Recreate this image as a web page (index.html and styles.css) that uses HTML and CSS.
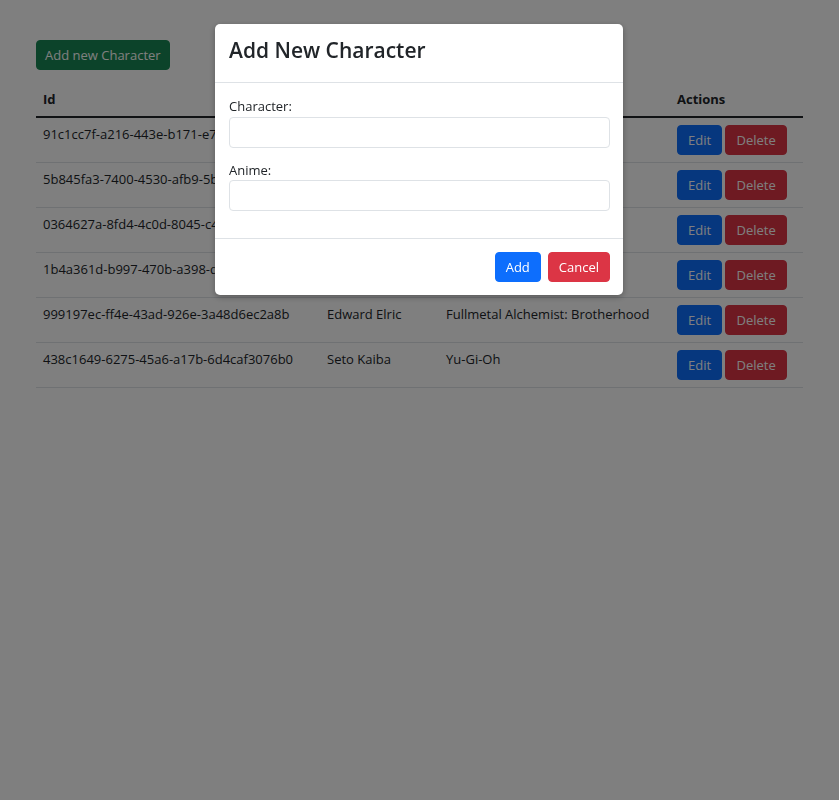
FILE: index.html
```html
<!DOCTYPE html>
<html>
<head>
    <title>Anime Characters</title>
    <link rel="stylesheet" href="styles.css">
</head>
<body>
    <div class="container">
        <div class="toolbar">
            <button class="btn btn-success">Add new Character</button>
        </div>

        <table class="characters">
            <thead>
                <tr>
                    <th class="col-id">Id</th>
                    <th class="col-name">Character</th>
                    <th class="col-anime">Anime</th>
                    <th class="col-actions">Actions</th>
                </tr>
            </thead>
            <tbody>
                <tr>
                    <td>91c1cc7f-a216-443e-b171-e7a4f20c91d3</td>
                    <td>Naruto</td>
                    <td>Naruto</td>
                    <td><button class="btn btn-primary">Edit</button> <button class="btn btn-danger">Delete</button></td>
                </tr>
                <tr>
                    <td>5b845fa3-7400-4530-afb9-5b12c7e0a6d4</td>
                    <td>Luffy</td>
                    <td>One Piece</td>
                    <td><button class="btn btn-primary">Edit</button> <button class="btn btn-danger">Delete</button></td>
                </tr>
                <tr>
                    <td>0364627a-8fd4-4c0d-8045-c4e9b1f73a02</td>
                    <td>Goku</td>
                    <td>Dragon Ball</td>
                    <td><button class="btn btn-primary">Edit</button> <button class="btn btn-danger">Delete</button></td>
                </tr>
                <tr>
                    <td>1b4a361d-b997-470b-a398-d5e2c81f4b67</td>
                    <td>Light</td>
                    <td>Death Note</td>
                    <td><button class="btn btn-primary">Edit</button> <button class="btn btn-danger">Delete</button></td>
                </tr>
                <tr>
                    <td>999197ec-ff4e-43ad-926e-3a48d6ec2a8b</td>
                    <td>Edward Elric</td>
                    <td>Fullmetal Alchemist: Brotherhood</td>
                    <td><button class="btn btn-primary">Edit</button> <button class="btn btn-danger">Delete</button></td>
                </tr>
                <tr>
                    <td>438c1649-6275-45a6-a17b-6d4caf3076b0</td>
                    <td>Seto Kaiba</td>
                    <td>Yu-Gi-Oh</td>
                    <td><button class="btn btn-primary">Edit</button> <button class="btn btn-danger">Delete</button></td>
                </tr>
            </tbody>
        </table>
    </div>

    <div class="backdrop"></div>

    <div class="modal">
        <div class="modal-header">
            <h2 class="modal-title">Add New Character</h2>
        </div>
        <div class="modal-body">
            <div class="form-group">
                <label for="characterName">Character:</label>
                <input type="text" id="characterName">
            </div>
            <div class="form-group">
                <label for="animeName">Anime:</label>
                <input type="text" id="animeName">
            </div>
        </div>
        <div class="modal-footer">
            <button class="btn btn-primary">Add</button>
            <button class="btn btn-danger">Cancel</button>
        </div>
    </div>
</body>
</html>
```

FILE: styles.css
```css
body {
    font-family: 'Open Sans', 'Noto Sans', sans-serif;
    font-size: 13px;
    line-height: 1.5;
    color: #212529;
    background: #fff;
    margin: 0;
}

.container {
    padding: 40px 36px;
}

.toolbar {
    display: flex;
    margin-bottom: 14px;
}

.btn {
    font-family: inherit;
    font-size: 13px;
    line-height: 20px;
    height: 30px;
    padding: 4px 10px;
    border: 1px solid transparent;
    border-radius: 4px;
    color: #fff;
    white-space: nowrap;
    cursor: pointer;
}

.btn-success {
    background: #198754;
    border-color: #198754;
    padding: 4px 8px;
}

.btn-primary {
    background: #0d6efd;
    border-color: #0d6efd;
}

.btn-danger {
    background: #dc3545;
    border-color: #dc3545;
}

.characters {
    width: 100%;
    border-collapse: collapse;
}

.characters th {
    text-align: left;
    font-weight: bold;
    padding: 6px 7px;
    border-bottom: 2px solid #212529;
}

.characters td {
    padding: 7px 7px;
    vertical-align: top;
    border-bottom: 1px solid #dee2e6;
    height: 30px;
}

.col-id { width: 270px; }
.col-name { width: 105px; }
.col-anime { width: 217px; }

.backdrop {
    position: fixed;
    inset: 0;
    background: rgba(0, 0, 0, 0.5);
}

.modal {
    position: fixed;
    top: 24px;
    left: 215px;
    width: 408px;
    background: #fff;
    border-radius: 5px;
    box-shadow: 0 2px 6px rgba(0, 0, 0, 0.3);
}

.modal-header {
    padding: 11px 14px 17px;
    border-bottom: 1px solid #dee2e6;
}

.modal-title {
    margin: 0;
    font-size: 21px;
    font-weight: 600;
    line-height: 30px;
}

.modal-body {
    padding: 14px 13px 14px 14px;
}

.form-group {
    margin-bottom: 13px;
}

.form-group label {
    display: block;
}

.form-group input {
    display: block;
    box-sizing: border-box;
    width: 100%;
    height: 31px;
    border: 1px solid #dee2e6;
    border-radius: 4px;
    font-family: inherit;
    font-size: 13px;
}

.modal-footer {
    display: flex;
    justify-content: flex-end;
    gap: 7px;
    padding: 13px 13px;
    border-top: 1px solid #dee2e6;
}
```
